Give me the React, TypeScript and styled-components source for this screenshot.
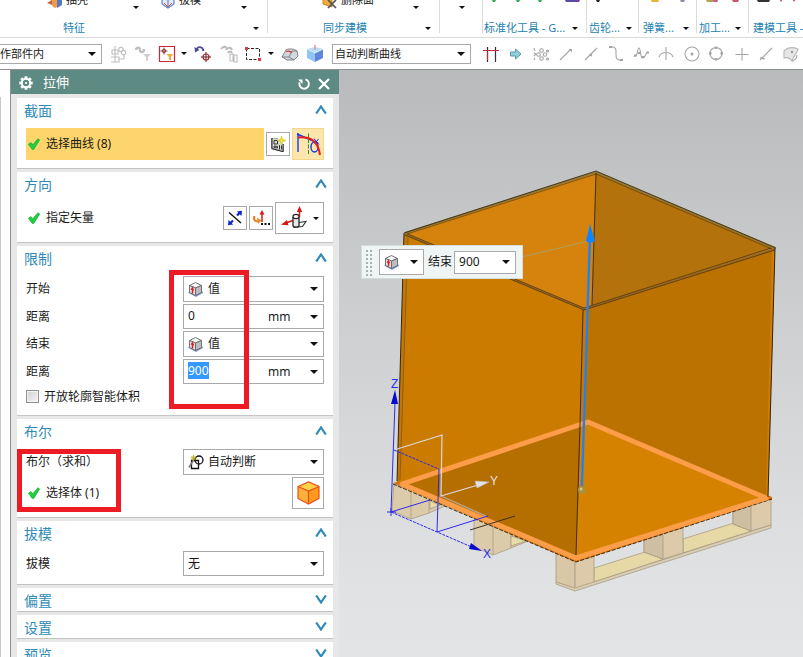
import React, { useEffect, useRef, useState } from "react";
import styled, { createGlobalStyle, css } from "styled-components";

const fontStack = `"Noto Sans", "Noto Sans CJK SC", sans-serif`;

const GlobalStyle = createGlobalStyle`
  *, *::before, *::after { box-sizing: border-box; }
  body { margin: 0; background: #fff; font-family: ${fontStack}; font-size: 12px; line-height: 16px; color: #1a1a1a; overflow: hidden; }
  button, input, select { font: inherit; color: inherit; margin: 0; }
  svg { display: block; flex: none; }
`;

/* ---------- layout ---------- */

const Page = styled.div`
  display: flex;
  flex-direction: column;
  height: 100vh;
  overflow: hidden;
`;

const Ribbon = styled.header`
  display: flex;
  flex: none;
  height: 38px;
  overflow: hidden;
  border-bottom: 1px solid #d9d9d9;
  font-size: 11px;
  white-space: nowrap;
`;

const Group = styled.section<{ $w?: number }>`
  position: relative;
  display: flex;
  flex-direction: column;
  justify-content: space-between;
  flex: ${(p) => (p.$w ? `0 0 ${p.$w}px` : "1 0 0")};
  min-width: 0;
  &::after {
    content: "";
    position: absolute;
    right: 0;
    top: 0;
    width: 1px;
    height: 33px;
    background: #dcdcdc;
  }
  &:last-child::after { display: none; }
`;

const CommandRow = styled.div<{ $pad?: number; $center?: boolean }>`
  display: flex;
  align-items: flex-end;
  justify-content: ${(p) => (p.$center ? "center" : "flex-start")};
  gap: 22px;
  height: 9px;
  padding-left: ${(p) => p.$pad ?? 0}px;
  overflow: hidden;
`;

const Command = styled.button<{ $w: number }>`
  display: flex;
  align-items: flex-end;
  gap: 3px;
  width: ${(p) => p.$w}px;
  padding: 0;
  border: 0;
  background: none;
  line-height: 18px;
  text-align: left;
  span { flex: 1; }
`;

const GroupLabel = styled.div<{ $pad: number; $end: number }>`
  display: flex;
  align-items: center;
  justify-content: space-between;
  height: 18px;
  padding: 0 ${(p) => p.$end}px 0 ${(p) => p.$pad}px;
  color: #2382b0;
`;

const Toolbar = styled.nav`
  display: flex;
  align-items: center;
  flex: none;
  height: 32px;
  border-bottom: 1px solid #8b8f90;
  font-size: 11px;
`;

const ToolCell = styled.button<{ $w?: number }>`
  display: flex;
  align-items: center;
  justify-content: center;
  flex: none;
  width: ${(p) => p.$w ?? 25}px;
  height: 24px;
  padding: 0;
  border: 0;
  background: none;
`;

const Body = styled.main`
  display: flex;
  flex: 1;
  min-height: 0;
`;

const Rail = styled.div`
  flex: none;
  width: 10px;
  margin-top: 27px;
  border-left: 1px solid #c9c9c9;
  background: #fff;
`;

const Panel = styled.aside`
  display: flex;
  flex-direction: column;
  flex: none;
  width: 329px;
  overflow: hidden;
  border-left: 1px solid #8e8e8e;
  background: #e7e7e7;
`;

const PanelHeader = styled.div`
  display: flex;
  align-items: center;
  flex: none;
  height: 24px;
  padding: 1px 5px 0 8px;
  background: #5d8a82;
  color: #fff;
  font-size: 13px;
  h1 { flex: 1; margin: 0 0 2px 10px; font: inherit; }
`;

const HeaderButton = styled.button`
  display: flex;
  align-items: center;
  justify-content: center;
  width: 20px;
  height: 20px;
  margin-top: 2px;
  padding: 0;
  border: 0;
  background: none;
`;

const Sections = styled.div`
  display: flex;
  flex-direction: column;
  gap: 4px;
  padding: 4px 6px 0;
`;

const SectionBox = styled.section`
  position: relative;
  flex: none;
  background: #fff;
  box-shadow: 0 1px 0 #c4c4c4;
`;

const SectionToggle = styled.button`
  display: flex;
  align-items: center;
  justify-content: space-between;
  width: 100%;
  height: 23px;
  padding: 2px 6px 0 7px;
  border: 0;
  background: none;
  color: #2f8ab8;
  font-size: 14px;
  svg { margin-bottom: 2px; }
`;

const SectionContent = styled.div`
  display: flex;
  flex-direction: column;
  gap: 2px;
  padding: 7px 9px 8px;
`;

const Row = styled.div`
  display: flex;
  align-items: center;
  gap: 2px;
`;

const FieldLabel = styled.label`
  flex: 1;
`;

const PickLabel = styled.div<{ $active?: boolean }>`
  display: flex;
  align-items: center;
  gap: 6px;
  flex: 1;
  height: 32px;
  padding-left: 2px;
  background: ${(p) => (p.$active ? "#fdd56c" : "transparent")};
`;

const ToolButton = styled.button<{ $size: "small" | "large" | "wide"; $active?: boolean }>`
  display: flex;
  align-items: center;
  justify-content: center;
  gap: 6px;
  padding: 0;
  width: ${(p) => ({ small: 24, large: 32, wide: 49 })[p.$size]}px;
  height: ${(p) => (p.$size === "small" ? 24 : 32)}px;
  border: 1px solid ${(p) => (p.$active ? "#f5d78a" : "#a9a9a9")};
  background: ${(p) => (p.$active ? "#fbe7ab" : "#fff")};
`;

const Combo = styled.div<{ $w: number; $h: number }>`
  display: flex;
  align-items: center;
  position: relative;
  flex: none;
  width: ${(p) => p.$w}px;
  height: ${(p) => p.$h}px;
  border: 1px solid #a9a9a9;
  background: #fff;
  > svg { position: absolute; pointer-events: none; }
  > svg:first-child { left: 4px; }
  > svg:last-child { right: 5px; }
`;

const ScopeCombo = styled(Combo)`
  margin-right: 3px;
  border-left: 0;
`;

const CurveRule = styled(Combo)`
  margin: 0 7px 0 4px;
`;

const Select = styled.select<{ $pad: number }>`
  appearance: none;
  flex: 1;
  min-width: 0;
  height: 100%;
  padding: 0 0 0 ${(p) => p.$pad}px;
  border: 0;
  border-radius: 0;
  outline: 0;
  background: transparent;
`;

const Input = styled.input`
  flex: 1;
  min-width: 0;
  height: 20px;
  padding: 0 0 2px 4px;
  border: 0;
  outline: 0;
  background: transparent;
  &::selection { background: #3399ff; color: #fff; }
`;

const UnitSelect = styled(Select)`
  flex: 0 0 57px;
`;

const CheckRow = styled.label`
  display: flex;
  align-items: center;
  gap: 5px;
  height: 21px;
  input {
    appearance: none;
    width: 13px;
    height: 13px;
    border: 1px solid #8e8f8f;
    background: linear-gradient(135deg, #cfd1d3, #f6f6f6);
    box-shadow: inset 0 0 0 1px #f4f4f4;
  }
`;

const Marker = styled.div<{ $x: number; $y: number; $w: number; $h: number }>`
  position: absolute;
  left: ${(p) => p.$x}px;
  top: ${(p) => p.$y}px;
  width: ${(p) => p.$w}px;
  height: ${(p) => p.$h}px;
  border: 5px solid #ed1c24;
  pointer-events: none;
`;

const Viewport = styled.div`
  position: relative;
  flex: 1;
  min-width: 0;
  overflow: hidden;
  background: linear-gradient(#b9babc, #cfd0d1 45%, #dfe1e3 85%, #e3e4e6);
`;

const FloatBar = styled.div`
  position: absolute;
  left: 22px;
  top: 175px;
  display: flex;
  align-items: center;
  width: 162px;
  height: 34px;
  padding-left: 3px;
  border: 1px solid #d5dcdc;
  background: #eff5f5;
  label { margin: 0 2px 0 4px; white-space: nowrap; }
`;

const Grip = styled.div`
  width: 7px;
  height: 27px;
  margin-right: 7px;
  background: radial-gradient(circle, #a9b1b1 1px, transparent 1px) 0 0 / 4px 4px;
`;

const greyIcon = css`
  fill: none;
  stroke: #a6a6a6;
  stroke-width: 1.1;
`;

const Glyph = styled.svg<{ $grey?: boolean }>`
  ${(p) => p.$grey && greyIcon}
`;

/* ---------- icons ---------- */

const Arrow = () => (
  <svg width="8" height="4" viewBox="0 0 8 4"><path d="M0 0h8L4 4z" fill="#111" /></svg>
);
const SmallArrow = () => (
  <svg width="6" height="3" viewBox="0 0 6 3"><path d="M0 0h6L3 3z" fill="#111" /></svg>
);

const Chevron = ({ open }: { open: boolean }) => (
  <svg width="12" height="9" viewBox="0 0 12 9">
    <path d={open ? "M1.200 8.500 6 1.500l4.800 7" : "M1.200 .5 6 7.500l4.800-7"} fill="none" stroke="#2f8ab8" strokeWidth="2.200" />
  </svg>
);

const Check = () => (
  <svg width="12" height="12" viewBox="0 0 12 12">
    <path d="M.4 6.300 3 4.500 4.800 6.800 9.800.800l1.900 1.100L5.800 11.400H4.200z" fill="#20cf3c" stroke="#0fa52e" strokeWidth=".6" />
  </svg>
);

const Gear = () => (
  <svg width="14" height="14" viewBox="-7 -7 14 14">
    {[0, 45, 90, 135, 180, 225, 270, 315].map((a) => (
      <rect key={a} x="-1.400" y="-6.700" width="2.800" height="3" fill="#fff" transform={`rotate(${a})`} />
    ))}
    <circle r="4.200" fill="none" stroke="#fff" strokeWidth="1.900" />
    <circle r="1.100" fill="#fff" />
  </svg>
);

const Reset = () => (
  <svg width="14" height="14" viewBox="0 0 14 14">
    <path d="M8.500 2.300A4.800 4.800 0 1 1 2.600 5.300" fill="none" stroke="#fff" strokeWidth="1.900" />
    <path d="M1 2.500h4.500V7z" fill="#fff" />
  </svg>
);

const Close = () => (
  <svg width="12" height="12" viewBox="0 0 12 12">
    <path d="M1 1l10 10M11 1 1 11" stroke="#fff" strokeWidth="2.200" />
  </svg>
);

const ValueCube = () => (
  <svg width="16" height="16" viewBox="0 0 16 16">
    <path d="M.5 12l7.500 4 7-4v-1.500l-7.500 3L.5 10.500z" fill="#7d9cdd" />
    <path d="M1.500 4.500 7.500 1.500l6 3-6 2.500z" fill="#f6f6f6" stroke="#666" strokeWidth=".9" />
    <path d="M1.500 4.500v7l6 3V7z" fill="#e2e2e2" stroke="#666" strokeWidth=".9" />
    <path d="M7.500 7l6-2.500v7l-6 3z" fill="#bdbdbd" stroke="#666" strokeWidth=".9" />
    <path d="M4.500 12.500V8" stroke="#d5202a" strokeWidth="1.500" />
    <path d="M2.500 8.500 4.500 5.500l1.800 4z" fill="#d5202a" />
  </svg>
);

const AutoIcon = () => (
  <svg width="16" height="16" viewBox="0 0 16 16">
    <path d="M3.500 6.500h7v8h-7z" fill="none" stroke="#111" strokeWidth="1.300" />
    <circle cx="11" cy="6" r="4" fill="none" stroke="#111" strokeWidth="1.300" />
    <path d="M1 13.500 5.500 6" stroke="#777" strokeWidth="1.500" />
    <path d="M5.500 1v6M2.500 4h6M3.500 2l4 4M7.500 2l-4 4" stroke="#b7a818" strokeWidth=".9" />
  </svg>
);

const OrangeCube = () => (
  <svg width="23" height="24" viewBox="0 0 23 24">
    <path d="M1 5.500 11.500 1 22 5.500 11.500 10z" fill="#ffd24a" />
    <path d="M1 5.500v12L11.500 23V10z" fill="#ffb03a" />
    <path d="M22 5.500v12L11.500 23V10z" fill="#ff9a1c" />
    <path d="M1 5.500 11.500 1 22 5.500v12L11.500 23 1 17.500zM1 5.500 11.500 10 22 5.500M11.500 10v13" fill="none" stroke="#e8501c" strokeWidth="1.200" />
  </svg>
);

const SketchIcon = () => (
  <svg width="16" height="16" viewBox="0 0 16 16">
    <path d="M2 2.500 8 3M2 2v10.500l11 3V8" fill="none" stroke="#333" strokeWidth="1.200" />
    <path d="M2 2.500 13 3v12.500L2 12.500z" fill="#d9dcd6" />
    <path d="M2 2v10.500l11 3V8M4 4.500h3.500V8H4zM4 10l3.500.5V12L4 11.500zM9.500 9v4.500M11.500 9.500v4" fill="none" stroke="#333" />
    <path d="M11.500 0l1.200 3.300L16 4.500l-3.300 1.200L11.500 9l-1.200-3.300L7 4.500l3.300-1.200z" fill="#eadf3c" stroke="#c9c22f" strokeWidth=".5" />
  </svg>
);

const CurveIcon = () => (
  <svg width="26" height="26" viewBox="0 0 26 26">
    <path d="M3 2v19M2 3l21 9" stroke="#1c35e8" strokeWidth="1.400" />
    <path d="M13.500 2.500v21" stroke="#2d8b2d" strokeDasharray="4 1.500" />
    <ellipse cx="19.500" cy="16" rx="3.500" ry="5" fill="none" stroke="#1c35e8" strokeWidth="1.400" />
    <path d="M19 7.500l5 6M23.500 8l-4 5" stroke="#1c35e8" />
    <path d="M3 6.500C15 5.500 23 9 25 24" fill="none" stroke="#e8201c" strokeWidth="2" />
  </svg>
);

const ReverseIcon = () => (
  <svg width="16" height="16" viewBox="0 0 16 16">
    <path d="M2 2.500l12 10.500" stroke="#111" strokeWidth="1.400" />
    <path d="M10 5.500 12.500 3M6 10.500 3.500 13" stroke="#1426c8" strokeWidth="2.200" />
    <path d="M15 .8 14.500 6 9.800 1.500zM1 15.200 1.500 10l4.700 4.500z" fill="#1426c8" />
  </svg>
);

const VectorIcon = () => (
  <svg width="18" height="18" viewBox="0 0 18 18">
    <path d="M2.500 7c-1.500 4 1 6 4.500 5" fill="none" stroke="#e8761a" strokeWidth="2" />
    <path d="M5 8.500 9.500 11.500 6 15z" fill="#eb8f22" />
    <path d="M10 13V4" stroke="#d81818" strokeWidth="1.500" />
    <path d="M7.500 5.500 10 1l2.500 4.500z" fill="#d81818" />
    <path d="M9 15h2M12.500 15h2M16 15h2" stroke="#111" strokeWidth="2" />
  </svg>
);

const FaceVectorIcon = () => (
  <svg width="26" height="26" viewBox="0 0 26 26">
    <path d="M18 17.500l7-1-3.500 5-9 1" fill="#fff" stroke="#333" strokeWidth="1.200" />
    <path d="M12 12v9c1.500 1.500 4.500 1.500 6 0v-9" fill="#e8e8e8" stroke="#222" strokeWidth="1.300" />
    <ellipse cx="15" cy="11.500" rx="3" ry="2.200" fill="#fff" stroke="#222" strokeWidth="1.200" />
    <path d="M18.500 12V6M12 15.500 6 17.500" stroke="#c81818" strokeWidth="1.500" />
    <path d="M15.800 7 18.500 1l2.700 6zM6 15 0 19.800l7.500.4z" fill="#d81818" />
  </svg>
);

/* Toolbar glyphs share an 18-unit box */
const Tool = ({ children, grey }: { children: React.ReactNode; grey?: boolean }) => (
  <Glyph $grey={grey} width="18" height="18" viewBox="0 0 18 18">{children}</Glyph>
);

const leftTools = [
  { name: "装配", node: <Tool grey><g stroke="#bdbdbd"><path d="M6 1v13M3 5h6v4H3zM2 12h8v5H2M6 9v8M10 14h5V9" /><circle cx="12" cy="4.500" r="2.200" /><circle cx="14.500" cy="7.500" r="2.200" /></g></Tool> },
  { name: "筛选", w: 26, node: <Tool grey><path d="M2 5c0-3 4-3 4 0s4 3 4-1" stroke="#c0c0c0" strokeWidth="2.400" /><path d="M9 9h8l-3 3v4l-2-1v-3z" fill="#cfcfcf" stroke="none" /></Tool> },
  { name: "选择过滤器", w: 21, node: <Tool><path d="M1.500 1.500h15v15h-15z" fill="#fff" stroke="#cf2438" strokeWidth="1.200" /><circle cx="6" cy="6" r="1.800" fill="none" stroke="#8b3b3b" /><path d="M6 2.500v7M2.500 6h7" stroke="#8b3b3b" strokeWidth=".9" /><path d="M8.500 9H15l-2 3v3.500l-2-1V12z" fill="#f3a93a" /></Tool> },
  { name: "过滤器菜单", w: 13, node: <SmallArrow /> },
  { name: "重定位", w: 26, node: <Tool><path d="M2.500 5c1-4 6-4 7 1" fill="none" stroke="#4d4a8c" strokeWidth="1.900" /><path d="M.5 2 1 7.500 5.500 5z" fill="#4d4a8c" /><circle cx="12" cy="12" r="3" fill="none" stroke="#c02430" strokeWidth="1.200" /><path d="M12 7v10M7 12h10" stroke="#5a2028" /></Tool> },
  { name: "历史", node: <Tool grey><path d="M1 4c2-3 5-3 6 0M6 5c2-3 5-3 6 0M8 8c1-2 3-2 4 0" stroke="#bdbdbd" strokeWidth="2.200" /><path d="M10 9h3v7h-3zM14 10h3v7h-3z" stroke="#bdbdbd" /></Tool> },
  { name: "框选", w: 24, node: <Tool><path d="M2.500 3.500h13v11h-13z" fill="none" stroke="#222" strokeDasharray="3 1.500" /><path d="M1 2h3v3H1zM14 13h3v3h-3z" fill="#e2373f" /></Tool> },
  { name: "框选菜单", w: 12, node: <SmallArrow /> },
  { name: "面", node: <Tool><path d="M1 12 5 5c3-2 9-1 11 1l1 5-4 4-7 0z" fill="#d4d7db" stroke="#80858b" /><path d="M1 12h7l5 3M8 12l3-6 5 0" fill="none" stroke="#80858b" /><path d="M5 6.500c3-1 5 0 6 1.500" fill="none" stroke="#d23a3a" strokeWidth="1.300" /></Tool> },
  { name: "着色", w: 26, node: <Tool><path d="M1 4 9 2l8 2-8 4z" fill="#b9dcf5" /><path d="M1 4v9l8 4V8z" fill="#8fc4f3" /><path d="M17 4v9l-8 4V8z" fill="#5f86da" /><path d="M9 0v8M1 4l8 4 8-4" fill="none" stroke="#d8ecff" /><path d="M9 0v5" stroke="#e06a6a" /></Tool> },
];

const rightTools = [
  { name: "相交处停止", node: <Tool><path d="M5.500 2v15M13.500 2v15" stroke="#333" strokeWidth="1.200" /><path d="M1 5.500h16M5.500 7v8" stroke="#c8283a" strokeWidth="1.200" /></Tool> },
  { name: "跟随圆角", node: <Tool><path d="M3.500 7h5V4L14 9l-5.500 5V11h-5z" fill="#8fd0dc" stroke="#5a96a3" /></Tool> },
  { name: "点捕捉", node: <Tool grey><path d="M2 3l1 3M2 8l2 1-2 2M2 15l1-2" /><circle cx="9.500" cy="5.500" r="1.800" /><circle cx="6.500" cy="9.500" r="1.800" /><circle cx="13" cy="9.500" r="1.800" /><circle cx="9.500" cy="13.500" r="1.800" /><circle cx="15.500" cy="6" r="1" /><circle cx="15.500" cy="14" r="1" /></Tool> },
  { name: "端点", node: <Tool grey><path d="M3 15 14 4" /><path d="M11.500 4h3.500v3.500z" fill="#a6a6a6" stroke="none" /></Tool> },
  { name: "中点", node: <Tool grey><path d="M3 15 15 3" /><path d="M7.500 9.500l2.500 1" strokeWidth="2" /></Tool> },
  { name: "控制点", node: <Tool grey><path d="M3 2c7-1 6 4 6 7s0 7 6 6" /><path d="M2 2h3M13 15h3" strokeWidth="2" /></Tool> },
  { name: "极点", node: <Tool grey><path d="M2 11c4 2 3-8 5-8s1 11 4 10 2-5 5-6" /><path d="M2 10.500h2.500M6 8h2.500M10 12h2.500M14.500 7.500H17" strokeWidth="2.200" /></Tool> },
  { name: "交点", node: <Tool grey><path d="M9 2v13M2 12c2-6 12-6 14 0" /></Tool> },
  { name: "圆心", node: <Tool grey><circle cx="10" cy="9" r="7" /><circle cx="10" cy="9" r="1" fill="#a6a6a6" /></Tool> },
  { name: "象限点", node: <Tool grey><circle cx="9" cy="8.500" r="6" /><path d="M9 1.500v2.500M9 13v2.500M2 8.500h2.500M13.500 8.500H16" strokeWidth="2.500" /></Tool> },
  { name: "现有点", node: <Tool grey><path d="M10 3v12.500M3.500 9.500h13" /></Tool> },
  { name: "曲线上的点", node: <Tool grey><path d="M3 15 15 3" /><path d="M3.500 12.500l4 1.500" strokeWidth="1.800" /></Tool> },
  { name: "面上的点", node: <Tool grey><path d="M2 6c4-4 9-4 14-2-1 5-4 5-6 12-2-3-5-4-8-3z" fill="#e6e6e6" stroke="#b8b8b8" /><path d="M10 16c4-1 5-4 5-6" /><circle cx="10" cy="7" r="1.200" fill="#999" stroke="none" /></Tool> },
];

/* ---------- ribbon ---------- */

const ShellIcon = () => (
  <svg width="16" height="14" viewBox="0 0 16 14"><path d="M0 8l8-5v8z" fill="#c9603e" /><path d="M5 0h9v10l-6 3-3-2z" fill="#f09c49" /><path d="M10 1l5-1v10l-5 3z" fill="#5578bf" /></svg>
);
const DraftIcon = () => (
  <svg width="15" height="14" viewBox="0 0 15 14"><path d="M1 5l6-3 6 3v4l-6 4-6-4zM7 3v9" fill="#e6ecf9" stroke="#5e83ca" strokeWidth="1.200" /><path d="M3 8l4 4 4-4" fill="none" stroke="#dd5546" /></svg>
);
const DeleteFaceIcon = () => (
  <svg width="16" height="14" viewBox="0 0 16 14"><path d="M1 3h9v9l-9-3z" fill="#f0ad3e" stroke="#c88120" /><path d="M6 5l8 8M14 5l-8 8" stroke="#555" strokeWidth="1.700" /></svg>
);

const commandEdges: Record<string, [number, number, string][]> = {
  std: [[9, 4, "#34a853"], [33, 4, "#34a853"], [55, 4, "#34a853"], [82, 13, "#5b49a8"], [93, 4, "#7b3fa0"]],
  gear: [[9, 4, "#222"]],
  spring: [[12, 8, "#e7b431"], [41, 5, "#8d8fae"]],
  work: [[9, 12, "#b6a548"], [16, 5, "#c35ba0"], [35, 7, "#c25b6b"]],
  model: [[8, 13, "#333"], [31, 2, "#c8283a"], [44, 2, "#c8283a"]],
};

const CommandEdge = ({ kind, w }: { kind: string; w: number }) => (
  <svg width={w} height="9" viewBox={`0 0 ${w} 9`}>
    {commandEdges[kind].map(([x, cw, c]) => (
      <path key={x} d={`M${x} 0h${cw}l-1 2h-${cw - 2}z`} fill={c} />
    ))}
  </svg>
);

const edgeGroups = [
  { kind: "std", label: "标准化工具 - G...", w: 104, pad: 1, end: 9 },
  { kind: "gear", label: "齿轮...", w: 52, pad: 2, end: 7 },
  { kind: "spring", label: "弹簧...", w: 58, pad: 4, end: 8 },
  { kind: "work", label: "加工...", w: 52, pad: 2, end: 8 },
];

/* ---------- 3D scene ---------- */

const Scene = () => (
  <svg width="464" height="587" viewBox="339 70 464 587" role="img" aria-label="箱体模型">
    <g stroke="#a89c84" strokeWidth=".8" strokeLinejoin="round">
      <g fill="#dccbaa">
        <path d="M394 484 392 511 411 519 429 513 445 506 429 496z" />
        <path d="M411 492v27M429 500v13" fill="none" />
        <path d="M474 518v29l19 8 18-7 17-7-17-10z" />
        <path d="M493 526v29M511 535v13" fill="none" />
      </g>
      <path d="M511 536v10l15-5z" fill="#e8dca8" />
      <path d="M430 501v8l10-4z" fill="#e8dca8" />
      <path d="M594 568 645 552 664 559 594 582z" fill="#e6d9a6" />
      <path d="M683 539 734 523 752 531 683 553z" fill="#e6d9a6" />
      <path d="M644 538v14l19 7 20-6v-25z" fill="#dccaaa" />
      <path d="M644 538v14l19 7v-24z" fill="#cfbfa2" />
      <path d="M733 512v12l18 7 20-6v-27z" fill="#dccaaa" />
      <path d="M733 512v12l18 7v-26z" fill="#cfbfa2" />
      <path d="M556 552v30l19 7v-30z" fill="#d9c7a6" />
      <path d="M575 560v29l19-6v-28z" fill="#dccaaa" />
      <path d="M556 582 575 588 771 525v3L575 591 556 584z" fill="#d9ceb2" />
    </g>

    <path d="M393 483 576 562 772 499V497L588 422z" fill="#d8700a" />
    <path d="M393 484 576 562 772 499" fill="none" stroke="#3b2b10" strokeDasharray="4 1.500" />
    <path d="M405 233 596 172 592 305 584 310z" fill="#d5830c" />
    <path d="M596 172 775 248 584 310 592 305z" fill="#b4720d" />
    <path d="M405 233 584 309 581 424 400 483 397 482z" fill="#cb7c00" />
    <path d="M584 309 775 248 768 497 589 422 581 424z" fill="#bb7200" />
    <path d="M402 483 582 423 576 558z" fill="#b56e00" />
    <path d="M581 424 589 422 766 498 576 558z" fill="#d58200" />
    <path d="M583 310 588 309 584 423 580 424z" fill="#c77800" />
    <path d="M772 250 775 248 768 497 766 496z" fill="#cf7c08" />
    <path d="M404 234 408 236 400 482 397 482z" fill="#c17705" />
    <path d="M402 484 588 422 766 498 576 558z" fill="none" stroke="#fb9d49" strokeWidth="5" strokeLinejoin="round" />

    <g fill="none" stroke="#33260f">
      <path d="M405 233 596 172 775 248" stroke="#8f7838" strokeWidth="2" />
      <path d="M405 234 584 309 775 249" stroke="#9a6820" strokeWidth="2" />
      <path d="M404 233 596 171 776 248" strokeWidth=".8" />
      <path d="M407 234 596 174 772 249" strokeWidth=".5" />
      <path d="M405 235 584 310 775 250M408 234 584 308 771 248" strokeWidth=".6" />
      <path d="M596 173 592 305" strokeWidth=".9" />
      <path d="M404 233 397 481M775 248 768 497" />
      <path d="M408 236 400 480" stroke="#805014" strokeWidth=".7" />
      <path d="M583 310 580 425 576 555" strokeWidth=".9" />
    </g>

    <path d="M522 257 588 241" stroke="#ae9c62" />
    <path d="M589 240 581 487" stroke="#8a70a0" />
    <path d="M590 240 582 487" stroke="#1784f5" strokeWidth="2" />
    <path d="M590 224 595 241Q590 244 586 241z" fill="#0f86ff" />
    <circle cx="582" cy="490" r="4" fill="#a9903f" />
    <circle cx="581" cy="489" r="1.500" fill="#d6c57a" />

    <g fill="none" stroke="#dcd9e2" strokeWidth="1.200">
      <path d="M394 450 442 435 441 496 478 485" />
      <path d="M441 496 486 516" stroke="#b8aaa0" />
    </g>
    <path d="M475 481 489 482 477 488z" fill="#e3e3e3" stroke="#bbb" strokeWidth=".6" />
    <path d="M470 530 515 516" stroke="#3a3220" />
    <g fill="none" stroke="#2b2bea">
      <path d="M391 516V508M387 512h9M391 512 395 403" />
      <path d="M391 512 474 548M394 450 439 469" strokeDasharray="3 1" />
      <path d="M439 469 437 532M391 512 430 500M437 532 488 516" />
    </g>
    <path d="M395 390 398 404h-7zM471 543 482 551 469 549z" fill="#0808cf" />
    <g fontFamily="Liberation Sans, sans-serif" fontSize="12">
      <text x="391" y="388" fill="#2b2bea">Z</text>
      <text x="483" y="558" fill="#2b2bea">X</text>
      <text x="490" y="485" fill="#e4e4e4">Y</text>
    </g>
  </svg>
);

/* ---------- panel pieces ---------- */

function Section({ title, initial = true, children }: { title: string; initial?: boolean; children?: React.ReactNode }) {
  const [open, setOpen] = useState(initial);
  return (
    <SectionBox>
      <SectionToggle aria-expanded={open} onClick={() => setOpen(!open)}>
        {title}
        <Chevron open={open} />
      </SectionToggle>
      {open && children}
    </SectionBox>
  );
}

function SelectRow({ id, label, value, icon, h = 26 }: { id: string; label: string; value: string; icon?: React.ReactNode; h?: number }) {
  return (
    <Row>
      <FieldLabel htmlFor={id}>{label}</FieldLabel>
      <Combo $w={141} $h={h}>
        {icon}
        <Select id={id} $pad={icon ? 24 : 4}><option>{value}</option></Select>
        <Arrow />
      </Combo>
    </Row>
  );
}

function DistanceRow({ id, value, selected }: { id: string; value: string; selected?: boolean }) {
  const ref = useRef<HTMLInputElement>(null);
  useEffect(() => {
    if (selected) {
      ref.current?.focus();
      ref.current?.select();
    }
  }, [selected]);
  return (
    <Row>
      <FieldLabel htmlFor={id}>距离</FieldLabel>
      <Combo $w={141} $h={25}>
        <Input id={id} ref={ref} defaultValue={value} />
        <UnitSelect $pad={2} aria-label="单位"><option>mm</option></UnitSelect>
        <Arrow />
      </Combo>
    </Row>
  );
}

export default function App() {
  return (
    <Page>
      <GlobalStyle />
      <Ribbon>
        <Group $w={268}>
          <CommandRow $pad={47}>
            <Command $w={92}><ShellIcon /><span>抽壳</span><SmallArrow /></Command>
            <Command $w={86}><DraftIcon /><span>拔模</span><SmallArrow /></Command>
          </CommandRow>
          <GroupLabel $pad={63} $end={9}>特征<SmallArrow /></GroupLabel>
        </Group>
        <Group $w={172}>
          <CommandRow $pad={54}>
            <Command $w={97}><DeleteFaceIcon /><span>删除面</span><SmallArrow /></Command>
          </CommandRow>
          <GroupLabel $pad={55} $end={9}>同步建模<SmallArrow /></GroupLabel>
        </Group>
        <Group $w={43}>
          <CommandRow $center><SmallArrow /></CommandRow>
        </Group>
        {edgeGroups.map((g) => (
          <Group key={g.kind} $w={g.w}>
            <CommandRow><CommandEdge kind={g.kind} w={g.w} /></CommandRow>
            <GroupLabel $pad={g.pad} $end={g.end}>{g.label}<SmallArrow /></GroupLabel>
          </Group>
        ))}
        <Group>
          <CommandRow><CommandEdge kind="model" w={54} /></CommandRow>
          <GroupLabel $pad={4} $end={0}>建模工具 - G...</GroupLabel>
        </Group>
      </Ribbon>

      <Toolbar aria-label="选择条">
        <ScopeCombo $w={102} $h={20}>
          <Select $pad={0} aria-label="选择范围"><option>作部件内</option></Select>
          <Arrow />
        </ScopeCombo>
        {leftTools.map((t) => <ToolCell key={t.name} $w={t.w} aria-label={t.name}>{t.node}</ToolCell>)}
        <CurveRule $w={139} $h={20}>
          <Select $pad={2} aria-label="曲线规则"><option>自动判断曲线</option></Select>
          <Arrow />
        </CurveRule>
        {rightTools.map((t) => <ToolCell key={t.name} aria-label={t.name}>{t.node}</ToolCell>)}
      </Toolbar>

      <Body>
        <Rail />
        <Panel>
          <PanelHeader>
            <Gear />
            <h1>拉伸</h1>
            <HeaderButton aria-label="重置"><Reset /></HeaderButton>
            <HeaderButton aria-label="关闭"><Close /></HeaderButton>
          </PanelHeader>
          <Sections>
            <Section title="截面">
              <SectionContent>
                <Row>
                  <PickLabel $active><Check />选择曲线 (8)</PickLabel>
                  <ToolButton $size="small" aria-label="绘制截面"><SketchIcon /></ToolButton>
                  <ToolButton $size="large" $active aria-label="曲线"><CurveIcon /></ToolButton>
                </Row>
              </SectionContent>
            </Section>
            <Section title="方向">
              <SectionContent>
                <Row>
                  <PickLabel><Check />指定矢量</PickLabel>
                  <ToolButton $size="small" aria-label="反向"><ReverseIcon /></ToolButton>
                  <ToolButton $size="small" aria-label="矢量对话框"><VectorIcon /></ToolButton>
                  <ToolButton $size="wide" aria-label="面/平面法向"><FaceVectorIcon /><SmallArrow /></ToolButton>
                </Row>
              </SectionContent>
            </Section>
            <Section title="限制">
              <SectionContent>
                <SelectRow id="start" label="开始" value="值" icon={<ValueCube />} />
                <DistanceRow id="start-distance" value="0" />
                <SelectRow id="end" label="结束" value="值" icon={<ValueCube />} />
                <DistanceRow id="end-distance" value="900" selected />
                <CheckRow><input type="checkbox" />开放轮廓智能体积</CheckRow>
              </SectionContent>
              <Marker $x={152} $y={24} $w={80} $h={139} />
            </Section>
            <Section title="布尔">
              <SectionContent>
                <SelectRow id="boolean" label="布尔（求和）" value="自动判断" icon={<AutoIcon />} />
                <Row>
                  <PickLabel><Check />选择体 (1)</PickLabel>
                  <ToolButton $size="large" aria-label="体"><OrangeCube /></ToolButton>
                </Row>
              </SectionContent>
              <Marker $x={0} $y={30} $w={104} $h={63} />
            </Section>
            <Section title="拔模">
              <SectionContent>
                <SelectRow id="draft" label="拔模" value="无" h={25} />
              </SectionContent>
            </Section>
            <Section title="偏置" initial={false} />
            <Section title="设置" initial={false} />
            <Section title="预览" initial={false} />
          </Sections>
        </Panel>
        <Viewport>
          <Scene />
          <FloatBar>
            <Grip />
            <Combo $w={45} $h={26}>
              <ValueCube />
              <Select $pad={24} aria-label="限制类型"><option aria-label="值"></option></Select>
              <Arrow />
            </Combo>
            <label htmlFor="float-end">结束</label>
            <Combo $w={62} $h={23}>
              <Input id="float-end" defaultValue="900" />
              <Arrow />
            </Combo>
          </FloatBar>
        </Viewport>
      </Body>
    </Page>
  );
}
